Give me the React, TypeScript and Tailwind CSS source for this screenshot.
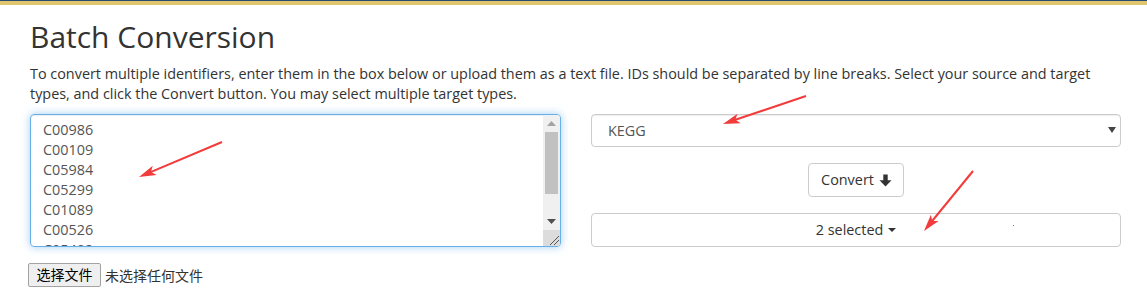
import React from "react";

const ids = ["C00986", "C00109", "C05984", "C05299", "C01089", "C00526", "C05402", "C00022", "C00186"];

// red annotation arrows drawn on top of the screenshot
function Arrow({ x1, y1, x2, y2 }: { x1: number; y1: number; x2: number; y2: number }) {
  const dx = x1 - x2;
  const dy = y1 - y2;
  const len = Math.hypot(dx, dy);
  const ux = dx / len;
  const uy = dy / len;
  const head = 17;
  const half = 5;
  const bx = x2 + ux * head;
  const by = y2 + uy * head;
  const pts = `${x2},${y2} ${bx - uy * half},${by + ux * half} ${x2 + ux * (head - 4)},${y2 + uy * (head - 4)} ${bx + uy * half},${by - ux * half}`;
  return (
    <g>
      <line x1={x1} y1={y1} x2={x2 + ux * 10} y2={y2 + uy * 10} stroke="#f23b3b" strokeWidth={2} />
      <polygon points={pts} fill="#f23b3b" />
    </g>
  );
}

export default function App() {
  return (
    <div className="relative min-h-[301px] bg-white text-[#333]" style={{ fontFamily: '"Open Sans", "Noto Sans CJK SC", sans-serif' }}>
      <div className="h-px bg-[#2b4a70]" />
      <div className="h-[4px] bg-[#dfc56c]" />
      <div className="px-[30px]">
        <h1 className="mt-[15px] text-[30px] font-normal leading-[33px] text-[#333]">Batch Conversion</h1>
        <p className="mt-[11px] max-w-[1080px] text-[14.4px] leading-5">
          To convert multiple identifiers, enter them in the box below or upload them as a text file. IDs should be
          separated by line breaks. Select your source and target types, and click the Convert button. You may select
          multiple target types.
        </p>
        <div className="mt-[10px] grid grid-cols-[531px_530px] gap-[30px]">
          <div>
            <div className="relative">
              <textarea
                readOnly
                value={ids.join("\n")}
                className="block h-[133px] w-full resize-none overflow-hidden rounded-[4px] border border-[#66afe9] py-[5px] pl-3 pr-[20px] text-[14.4px] leading-5 text-[#555] shadow-[inset_0_1px_1px_rgba(0,0,0,0.075),0_0_8px_rgba(102,175,233,0.6)] outline-none"
              />
              {/* classic scrollbar + resize grip */}
              <div className="pointer-events-none absolute bottom-px right-px top-px flex w-[17px] flex-col overflow-hidden rounded-r-[3px] bg-[#f0f0f0]">
                <div className="flex h-[17px] shrink-0 items-center justify-center">
                  <svg width="9" height="5" viewBox="0 0 9 5">
                    <polygon points="0,5 9,5 4.5,0" fill="#a3a3a3" />
                  </svg>
                </div>
                <div className="mx-auto h-[62px] w-[13px] shrink-0 bg-[#c1c1c1]" />
                <div className="flex-1" />
                <div className="flex h-[17px] shrink-0 items-center justify-center">
                  <svg width="9" height="5" viewBox="0 0 9 5">
                    <polygon points="0,0 9,0 4.5,5" fill="#505050" />
                  </svg>
                </div>
                <div className="relative h-[16px] shrink-0 bg-[#dcdcdc]">
                  <svg className="absolute bottom-[1px] right-[1px]" width="10" height="10" viewBox="0 0 10 10">
                    <line x1="1" y1="10" x2="10" y2="1" stroke="#555" strokeWidth="1" />
                    <line x1="5" y1="10" x2="10" y2="5" stroke="#555" strokeWidth="1" />
                  </svg>
                </div>
              </div>
            </div>
            <div className="mt-[16px] flex items-center gap-1 text-[14px]">
              <button
                type="button"
                className="-ml-[2px] h-[24px] w-[73px] rounded-[2px] border border-[#a3a3a3] bg-[#efefef] text-[14px] leading-none text-black"
              >
                选择文件
              </button>
              <span className="text-[#333]">未选择任何文件</span>
            </div>
          </div>
          <div>
            <div className="relative">
              <select className="block h-[33px] w-full appearance-none rounded-[4px] border border-[#ccc] bg-white pl-4 text-[14.4px] text-[#555] shadow-[inset_0_1px_1px_rgba(0,0,0,0.075)] outline-none">
                <option>KEGG</option>
              </select>
              <svg className="pointer-events-none absolute right-[5px] top-[13px]" width="8" height="6" viewBox="0 0 8 6">
                <polygon points="0,0 8,0 4,6" fill="#444" />
              </svg>
            </div>
            <div className="mt-4 flex justify-center">
              <button
                type="button"
                className="flex h-[34px] items-center gap-[5px] rounded-[4px] border border-[#ccc] bg-white pl-3 pr-[11px] text-[14.4px] text-[#333]"
              >
                Convert
                <svg width="13" height="13" viewBox="0 0 13 13">
                  <path d="M4.3 0.5h4.4v5.8h3.8L6.5 12.5 0.5 6.3h3.8z" fill="#333" />
                </svg>
              </button>
            </div>
            <button
              type="button"
              className="mt-4 flex h-[34px] w-full items-center justify-center gap-[5px] rounded-[4px] border border-[#ccc] bg-white text-[14.4px] text-[#333]"
            >
              2 selected
              <svg width="8" height="4" viewBox="0 0 8 4">
                <polygon points="0,0 8,0 4,4" fill="#333" />
              </svg>
            </button>
          </div>
        </div>
      </div>
      <svg className="pointer-events-none absolute inset-0" width="1147" height="301">
        <Arrow x1={222} y1={142} x2={139} y2={177} />
        <Arrow x1={806} y1={96} x2={723} y2={124} />
        <Arrow x1={973} y1={171} x2={924} y2={231} />
        <rect x={1013} y={225} width={1} height={1} fill="#e05050" />
      </svg>
    </div>
  );
}
